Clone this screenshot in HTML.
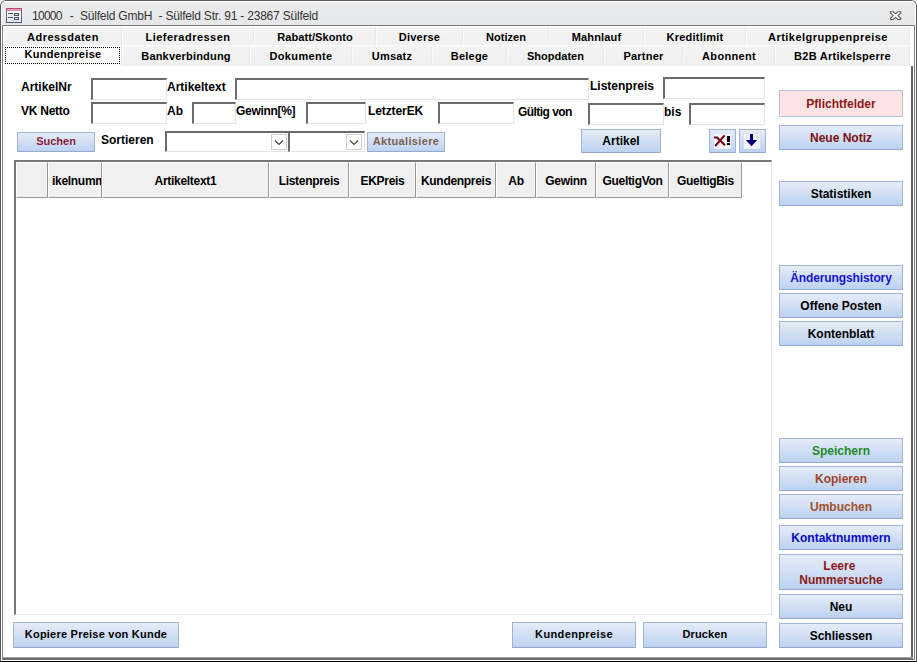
<!DOCTYPE html>
<html><head><meta charset="utf-8">
<style>
*{box-sizing:border-box;margin:0;padding:0}
html,body{width:917px;height:662px;background:#fff;overflow:hidden;font-family:"Liberation Sans",sans-serif;}
.abs{position:absolute}
#win{position:absolute;left:0;top:0;width:917px;height:662px;background:#fff;border:1px solid #5a5a5a;border-bottom-color:#000;border-radius:6px 6px 0 0;overflow:hidden}
#tbar{position:absolute;left:0;top:0;width:915px;height:24px;background:linear-gradient(#eaebec,#e6e7e9);border-top:1px solid #fff;border-left:1px solid #fff;border-right:1px solid #fff}
#title{position:absolute;left:31px;top:8px;font-size:12px;line-height:14px;color:#333;white-space:pre;letter-spacing:-.2px}
/* inner frame */
#frame{position:absolute;left:1px;top:24px;width:913px;height:635px;background:#fff;border:1px solid #808080;border-top-color:#7a7a7a;border-bottom-color:#707070}
.tab{position:absolute;height:18px;background:linear-gradient(#f4f4f4,#f0f0f0);font-weight:bold;font-size:11px;line-height:20px;text-align:center;color:#000;letter-spacing:.55px;white-space:nowrap;border-left:1px solid #f9f9f9;border-right:1px solid #eaeaea}
.lbl{position:absolute;font-weight:bold;font-size:12px;line-height:14px;color:#000;white-space:nowrap}
.fld{position:absolute;height:22px;background:#fff;border-top:2px solid #6b6b6b;border-left:2px solid #6b6b6b;border-right:1px solid #e4e4e4;border-bottom:1px solid #e4e4e4}
.btn{position:absolute;border:1px solid #a3b4d3;border-bottom-color:#97a9cb;background:linear-gradient(#e4ecf8 0%,#d3e0f4 45%,#bcd2f2 100%);font-weight:bold;font-size:12px;text-align:center;color:#000;white-space:nowrap;display:flex;align-items:center;justify-content:center;line-height:13px;padding-top:1px}
.b11{font-size:11px;letter-spacing:0;padding-top:0;padding-bottom:2px}
.hd{position:absolute;top:161px;height:36px;background:#f0f0f0;border-left:1px solid #fff;border-top:1px solid #fff;border-right:1px solid #989898;border-bottom:1px solid #989898;font-weight:bold;font-size:12px;line-height:37px;text-align:center;white-space:nowrap;overflow:hidden;letter-spacing:-.3px}
.dd{position:absolute;width:16px;height:16px;border:1px solid #cfcfcf;background:#fff}
</style></head><body>
<div id="win">
<div id="tbar"></div>
<!-- icon -->
<svg class="abs" style="left:5px;top:7px" width="17" height="16" viewBox="0 0 17 16">
<defs><linearGradient id="ig" x1="0" y1="0" x2="0" y2="1"><stop offset="0" stop-color="#ffffff"/><stop offset="1" stop-color="#dfe8f7"/></linearGradient>
<linearGradient id="ib" x1="0" y1="0" x2="0" y2="1"><stop offset="0" stop-color="#b8406c"/><stop offset=".35" stop-color="#8a6078"/><stop offset="1" stop-color="#4e5866"/></linearGradient></defs>
<rect x="0.5" y="0.5" width="15" height="14" fill="url(#ig)" stroke="url(#ib)"/>
<rect x="0" y="0" width="16" height="2.6" fill="#bf4672"/>
<rect x="1" y="1" width="14" height="1" fill="#e6a0ba"/>
<rect x="2" y="5" width="5" height="1" fill="#4a5565"/>
<rect x="2" y="9" width="5" height="1" fill="#4a5565"/>
<rect x="8.5" y="5.5" width="4" height="2" fill="#d4e2f6" stroke="#46546a"/>
<rect x="8.5" y="9.5" width="4" height="2" fill="#d4e2f6" stroke="#46546a"/>
</svg>
<div id="title"><span style="letter-spacing:-.72px;margin-right:1.8px">10000</span>  -  Sülfeld GmbH  - Sülfeld Str. 91 - 23867 Sülfeld</div>
<!-- close X -->
<svg class="abs" style="left:887px;top:9px" width="15" height="12" viewBox="0 0 15 12">
<path transform="translate(0.6,0.2) scale(1,0.9)" d="M2.2 1.6 L4.6 1.6 L7 4 L9.4 1.6 L11.8 1.6 Q12.8 2.2 12 3.2 L9.4 6 L12 8.8 Q12.8 9.8 11.8 10.4 L9.4 10.4 L7 8 L4.6 10.4 L2.2 10.4 Q1.2 9.8 2 8.8 L4.6 6 L2 3.2 Q1.2 2.2 2.2 1.6 Z" fill="#fff" stroke="#555" stroke-width="1.1" stroke-linejoin="round"/>
</svg>
<div id="frame"></div>
<div class="abs" style="left:910px;top:65px;width:2px;height:593px;background:#646464"></div>
<div class="abs" style="left:2px;top:656px;width:910px;height:1px;background:#a6a6a6"></div>
<div class="abs" style="left:2px;top:657px;width:910px;height:1px;background:#666"></div>

<!-- tabs row 1 -->
<div class="tab" style="left:3px;top:26px;width:118px;letter-spacing:0.47px">Adressdaten</div>
<div class="tab" style="left:121px;top:26px;width:132px;letter-spacing:0.48px">Lieferadressen</div>
<div class="tab" style="left:253px;top:26px;width:122px;letter-spacing:0.07px">Rabatt/Skonto</div>
<div class="tab" style="left:375px;top:26px;width:87px;letter-spacing:0.24px">Diverse</div>
<div class="tab" style="left:462px;top:26px;width:86px;letter-spacing:0.04px">Notizen</div>
<div class="tab" style="left:548px;top:26px;width:95px;letter-spacing:0.14px">Mahnlauf</div>
<div class="tab" style="left:643px;top:26px;width:102px;letter-spacing:0.23px">Kreditlimit</div>
<div class="tab" style="left:745px;top:26px;width:164px;letter-spacing:0.46px">Artikelgruppenpreise</div>
<!-- tabs row 2 -->
<div class="tab" style="left:3px;top:44px;width:118px;height:21px;background:#fbfbfb;line-height:18px;letter-spacing:0.31px">Kundenpreise</div>
<div class="abs" style="left:4px;top:46px;width:115px;height:17px;border:1px dotted #000"></div>
<div class="tab" style="left:121px;top:45px;width:128px;height:20px;line-height:20px;letter-spacing:0.19px">Bankverbindung</div>
<div class="tab" style="left:249px;top:45px;width:102px;height:20px;line-height:20px;letter-spacing:0.34px">Dokumente</div>
<div class="tab" style="left:351px;top:45px;width:80px;height:20px;line-height:20px;letter-spacing:0.20px">Umsatz</div>
<div class="tab" style="left:431px;top:45px;width:75px;height:20px;line-height:20px;letter-spacing:0.20px">Belege</div>
<div class="tab" style="left:506px;top:45px;width:97px;height:20px;line-height:20px;letter-spacing:0.02px">Shopdaten</div>
<div class="tab" style="left:603px;top:45px;width:79px;height:20px;line-height:20px;letter-spacing:0.22px">Partner</div>
<div class="tab" style="left:682px;top:45px;width:92px;height:20px;line-height:20px;letter-spacing:0.31px">Abonnent</div>
<div class="tab" style="left:774px;top:45px;width:135px;height:20px;line-height:20px;letter-spacing:0.25px">B2B Artikelsperre</div>

<!-- labels -->
<div class="lbl" style="left:20px;top:79px">ArtikelNr</div>
<div class="lbl" style="left:166px;top:79px">Artikeltext</div>
<div class="lbl" style="left:589px;top:78px">Listenpreis</div>
<div class="lbl" style="left:20px;top:103px;letter-spacing:-.25px">VK Netto</div>
<div class="lbl" style="left:166px;top:103px">Ab</div>
<div class="lbl" style="left:235px;top:103px;letter-spacing:-.3px">Gewinn[%]</div>
<div class="lbl" style="left:367px;top:103px;letter-spacing:-.1px">LetzterEK</div>
<div class="lbl" style="left:517px;top:104px;letter-spacing:-.55px">Gültig von</div>
<div class="lbl" style="left:663px;top:104px">bis</div>
<div class="lbl" style="left:100px;top:132px">Sortieren</div>

<!-- fields -->
<div class="fld" style="left:90px;top:77px;width:76px"></div>
<div class="fld" style="left:234px;top:77px;width:354px"></div>
<div class="fld" style="left:662px;top:76px;width:102px"></div>
<div class="fld" style="left:90px;top:101px;width:76px"></div>
<div class="fld" style="left:191px;top:101px;width:44px"></div>
<div class="fld" style="left:305px;top:101px;width:60px"></div>
<div class="fld" style="left:437px;top:101px;width:76px"></div>
<div class="fld" style="left:587px;top:102px;width:76px"></div>
<div class="fld" style="left:688px;top:102px;width:76px"></div>
<!-- combos -->
<div class="fld" style="left:164px;top:130px;width:124px;height:21px"></div>
<div class="fld" style="left:287px;top:130px;width:77px;height:21px"></div>
<div class="dd" style="left:270px;top:133px"><svg width="14" height="14" viewBox="0 0 14 14"><path d="M3 5.5 L7 9.5 L11 5.5" fill="none" stroke="#444" stroke-width="1.2"/></svg></div>
<div class="dd" style="left:345px;top:133px"><svg width="14" height="14" viewBox="0 0 14 14"><path d="M3 5.5 L7 9.5 L11 5.5" fill="none" stroke="#444" stroke-width="1.2"/></svg></div>

<!-- top buttons -->
<div class="btn b11" style="left:16px;top:131px;width:78px;height:20px;color:#8a1e38">Suchen</div>
<div class="btn b11" style="left:366px;top:131px;width:78px;height:20px;color:#7b6152;letter-spacing:.35px">Aktualisiere</div>
<div class="btn" style="left:580px;top:128px;width:80px;height:24px">Artikel</div>
<div class="btn" style="left:708px;top:128px;width:27px;height:24px">
<svg class="abs" style="left:0;top:0" width="25" height="22" viewBox="0 0 25 22"><rect x="4" y="4" width="17" height="15" fill="#f1f4fb"/><path d="M4 7.5 L7 7.5 L15 15.3 M14.6 5.4 L5.2 16" stroke="#7c0014" stroke-width="2.1" fill="none"/><rect x="17" y="6" width="3" height="6" fill="#000"/><rect x="17" y="13" width="3" height="2" fill="#000"/></svg></div>
<div class="btn" style="left:738px;top:128px;width:27px;height:24px">
<svg class="abs" style="left:0;top:0" width="25" height="22" viewBox="0 0 25 22"><rect x="4" y="4" width="16" height="15" fill="#f1f4fb"/><path d="M10 4 L13 4 L13 10 L17.2 10 L11.5 16.2 L5.8 10 L10 10 Z" fill="#00007c"/></svg></div>

<!-- grid -->
<div class="abs" style="left:13px;top:159px;width:758px;height:455px;background:#fff;border-top:2px solid #777;border-left:2px solid #777;border-right:1px solid #e6e6e6;border-bottom:1px solid #e6e6e6"></div>
<div class="hd" style="left:15px;width:32px"></div>
<div class="hd" style="left:47px;width:54px;text-align:left;padding-left:3px">ikelnumm</div>
<div class="hd" style="left:101px;width:167px">Artikeltext1</div>
<div class="hd" style="left:268px;width:80px">Listenpreis</div>
<div class="hd" style="left:348px;width:67px">EKPreis</div>
<div class="hd" style="left:415px;width:80px">Kundenpreis</div>
<div class="hd" style="left:495px;width:40px">Ab</div>
<div class="hd" style="left:535px;width:60px">Gewinn</div>
<div class="hd" style="left:595px;width:73px">GueltigVon</div>
<div class="hd" style="left:668px;width:73px">GueltigBis</div>

<!-- right buttons -->
<div class="btn" style="left:778px;top:89px;width:124px;height:27px;color:#8b1a1a;background:#fde3e3;border-color:#b9c3dc">Pflichtfelder</div>
<div class="btn" style="left:778px;top:124px;width:124px;height:25px;color:#7a1010">Neue Notiz</div>
<div class="btn" style="left:778px;top:180px;width:124px;height:25px">Statistiken</div>
<div class="btn" style="left:778px;top:264px;width:124px;height:25px;color:#1414d2;letter-spacing:-.12px">Änderungshistory</div>
<div class="btn" style="left:778px;top:292px;width:124px;height:25px">Offene Posten</div>
<div class="btn" style="left:778px;top:320px;width:124px;height:25px">Kontenblatt</div>
<div class="btn" style="left:778px;top:437px;width:124px;height:25px;color:#1e8c2a">Speichern</div>
<div class="btn" style="left:778px;top:465px;width:124px;height:25px;color:#a0432a">Kopieren</div>
<div class="btn" style="left:778px;top:493px;width:124px;height:25px;color:#a0522d">Umbuchen</div>
<div class="btn" style="left:778px;top:524px;width:124px;height:25px;color:#0a0ac8">Kontaktnummern</div>
<div class="btn" style="left:778px;top:553px;width:124px;height:36px;color:#8b1a1a;white-space:pre;line-height:14px">Leere <br>Nummersuche</div>
<div class="btn" style="left:778px;top:593px;width:124px;height:25px">Neu</div>
<div class="btn" style="left:778px;top:622px;width:124px;height:25px">Schliessen</div>

<!-- bottom buttons -->
<div class="btn b11" style="left:12px;top:621px;width:166px;height:26px;padding-bottom:1px;letter-spacing:.23px">Kopiere Preise von Kunde</div>
<div class="btn b11" style="left:511px;top:621px;width:124px;height:26px;padding-bottom:1px;letter-spacing:.37px">Kundenpreise</div>
<div class="btn b11" style="left:642px;top:621px;width:124px;height:26px;padding-bottom:1px;letter-spacing:.13px">Drucken</div>
</div>
</body></html>
